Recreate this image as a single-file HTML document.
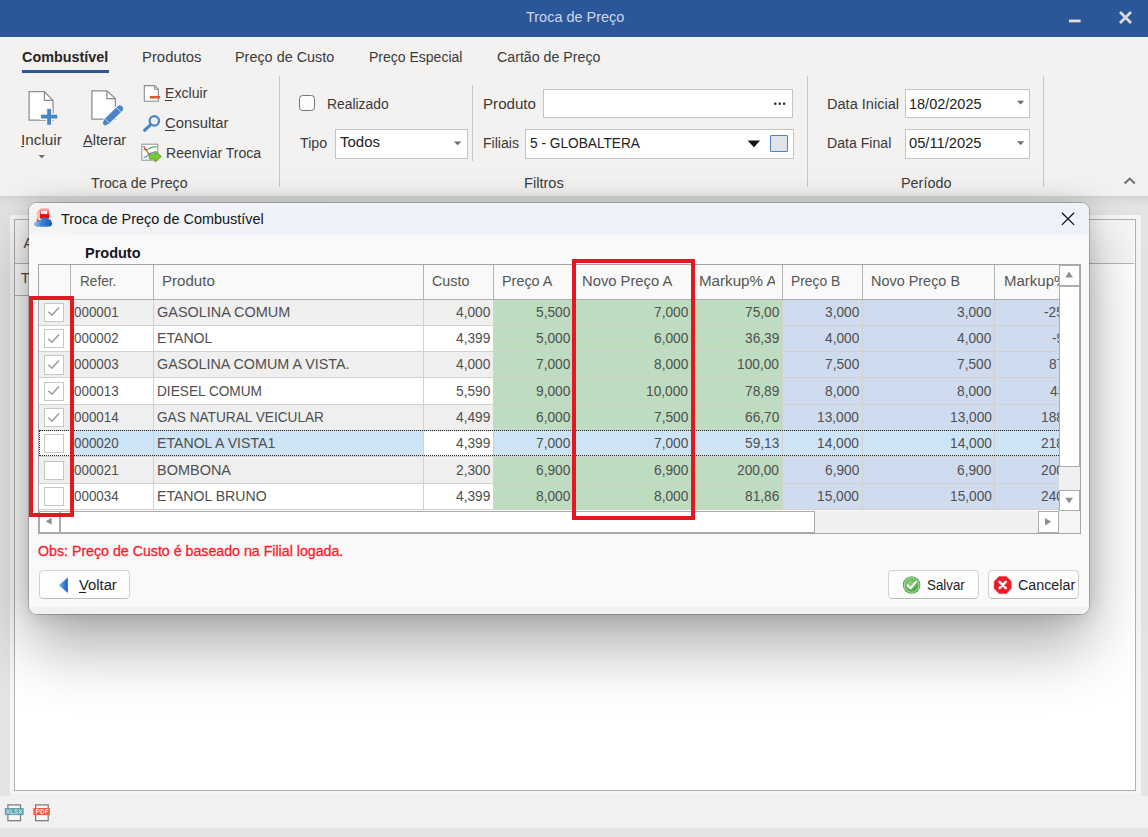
<!DOCTYPE html>
<html><head><meta charset="utf-8"><title>Troca de Preço</title>
<style>
*{box-sizing:border-box;margin:0;padding:0}
html,body{width:1148px;height:837px;overflow:hidden;background:#e4e4e4;font-family:"Liberation Sans",sans-serif}
body{position:relative}
.a{position:absolute}
.t{position:absolute;white-space:pre;transform-origin:0 0;font-family:"Liberation Sans",sans-serif}
.clip{position:absolute;overflow:hidden}
.ul{position:absolute;height:1px}
#texts{position:absolute;left:0;top:0;z-index:20}
#titlebar{left:0;top:0;width:1148px;height:37px;background:#2b579a}
#ribbon{left:0;top:37px;width:1148px;height:159px;background:#f3f2f1}
.gsep{position:absolute;width:1px;background:#c9c7c5}
.inp{position:absolute;background:#fff;border:1px solid #c4c4c4}
#rshadow{left:0;top:196px;width:1148px;height:12px;background:linear-gradient(to bottom,rgba(0,0,0,.07),rgba(0,0,0,.03) 40%,rgba(0,0,0,0))}
#pouter{left:10px;top:215px;width:1130.5px;height:579px;background:#f6f6f6}
#panel{left:13.5px;top:218.5px;width:1122px;height:572.5px;background:#fff;border:1.2px solid #b0b0b0}
#status{left:0;top:794px;width:1148px;height:34px;background:#f2f1f0}
#bottom{left:0;top:828px;width:1148px;height:9px;background:#e4e4e4}
#dialog{left:29px;top:203px;width:1060px;height:411px;background:#f9f9f9;border-radius:8px;
 box-shadow:0 0 0 1px rgba(0,0,0,.2),0 32px 64px rgba(0,0,0,.33),0 0 22px rgba(0,0,0,.17);z-index:10;overflow:hidden}
#dtitle{left:0;top:0;width:1060px;height:32px;background:linear-gradient(90deg,#f4f4f5 0%,#eff2fa 30%,#eff2fa 70%,#f0f2f9 100%)}
#dfoot{left:0;top:403.5px;width:1060px;height:8px;background:#f1f1f1}
#grid{left:9px;top:61px;width:1043.5px;height:269.5px;border:1.3px solid #a3a3a3;background:#f9f9f9;overflow:hidden}
.btn{position:absolute;height:28.5px;border:1px solid #d2d2d2;border-bottom-color:#bdbdbd;border-radius:4.5px;background:#fdfdfd}
.red{position:absolute;border:4.1px solid #e01a21;z-index:30}
.cb{position:absolute;width:19.6px;height:19.2px;background:#fff;border:1.2px solid #c6c6c6}

</style></head>
<body>
<div id="titlebar" class="a"></div>
<svg class="a" style="left:1060px;top:5px" width="80" height="28" viewBox="1060 5 80 28"><rect x="1069" y="19.6" width="11.6" height="2.7" fill="#e4e0dc"/><path d="M1120 11.9 L1131 22.9 M1131 11.9 L1120 22.9" stroke="#dadada" stroke-width="2.8" fill="none"/></svg>
<div id="ribbon" class="a"></div>
<div class="a" style="left:22.00px;top:69.60px;width:86.60px;height:3.90px;background:#2b579a"></div>
<div class="gsep" style="left:279px;top:76px;height:111px"></div>
<div class="gsep" style="left:807px;top:76px;height:111px"></div>
<div class="gsep" style="left:1043px;top:76px;height:111px"></div>
<div class="gsep" style="left:472px;top:85px;height:75.5px"></div>
<div class="inp" style="left:335.00px;top:129.00px;width:132.50px;height:29.50px;"></div>
<div class="inp" style="left:543.00px;top:89.00px;width:250.00px;height:29.00px;"></div>
<div class="inp" style="left:525.00px;top:129.00px;width:269.00px;height:29.50px;"></div>
<div class="inp" style="left:905.00px;top:89.00px;width:125.00px;height:29.00px;"></div>
<div class="inp" style="left:905.00px;top:129.00px;width:125.00px;height:29.50px;"></div>
<div class="a" style="left:298.70px;top:94.80px;width:16.30px;height:16.20px;border:1.3px solid #767676;border-radius:3.5px;background:#fbfbfb"></div>
<div class="a" style="left:770.30px;top:135.00px;width:17.40px;height:17.30px;border:1.3px solid #4a86c5;background:#dfe3ea;border-radius:1px"></div>
<svg class="a" style="left:0;top:76px" width="1148" height="120" viewBox="0 76 1148 120">
<!-- Incluir -->
<path d="M29.1 91.7 H44.4 L53 100.4 V120 H29.1 Z" fill="#fff" stroke="#8c8c8c" stroke-width="1.25" stroke-linejoin="miter"/>
<path d="M44.4 91.7 V100.4 H53" fill="none" stroke="#8c8c8c" stroke-width="1.25"/>
<rect x="39.2" y="112.8" width="20" height="8" fill="#f3f2f1" opacity="0"/>
<path d="M39.6 116.7 H58.8 M49.1 107.4 V126.2" stroke="#f3f2f1" stroke-width="6.6" fill="none"/><path d="M41.1 116.7 H57.3 M49.1 108.9 V124.7" stroke="#4a86c6" stroke-width="3.8" fill="none"/>
<path d="M38.5 154.9 H45 L41.75 158.6 Z" fill="#6e6e6e"/>
<!-- Alterar -->
<path d="M91.9 90.8 H106.9 L115.4 98.6 V119.1 H91.9 Z" fill="#fff" stroke="#8c8c8c" stroke-width="1.25"/>
<path d="M106.9 90.8 V98.6 H115.4" fill="none" stroke="#8c8c8c" stroke-width="1.25"/>
<g transform="translate(103.2,124.8) rotate(-44.2)">
<path d="M-0.6 0 L4.6 -4.4 H24.3 Q27.6 -4.4 27.6 0 Q27.6 4.4 24.3 4.4 H4.6 Z" fill="#f3f2f1"/>
<path d="M0.3 0.9 L0.9 -1.6 L4.8 -3.2 H23.6 Q26.3 -3.2 26.3 0 Q26.3 3.2 23.6 3.2 H4.8 L2.0 2.2 Z" fill="#4a86c6"/>
<path d="M5.6 -3.2 V3.2 M21.6 -3.2 V3.2" stroke="#cfe0f2" stroke-width="0.8"/>
</g>
<!-- Excluir -->
<path d="M144.3 85.6 H154.6 L158.3 89.3 V101.2 H144.3 Z" fill="#fff" stroke="#8c8c8c" stroke-width="1.1"/>
<path d="M154.6 85.6 V89.3 H158.3" fill="none" stroke="#8c8c8c" stroke-width="1"/>
<rect x="149.9" y="95.9" width="10.1" height="2.6" fill="#d9593a"/>
<!-- Consultar -->
<circle cx="154.3" cy="120.9" r="4.7" fill="none" stroke="#4a86c6" stroke-width="2.3"/>
<path d="M150.8 124.6 L144.6 130.2" stroke="#4a86c6" stroke-width="3.2" stroke-linecap="round"/>
<!-- Reenviar Troca -->
<rect x="141.8" y="144.2" width="16" height="16" fill="#fff" stroke="#9a9a9a" stroke-width="1.1"/>
<path d="M143.5 149.8 Q148 149.5 150.5 148 T157 146.8" stroke="#3fa33f" stroke-width="1.2" fill="none"/>
<path d="M143.5 146.2 L150.5 156.5" stroke="#d63a2f" stroke-width="1.2" fill="none"/>
<path d="M143.5 157.5 Q147 157 149 154.5 T156.5 152" stroke="#3f86d6" stroke-width="1.2" fill="none"/>
<path d="M149.3 153.9 H155 V151 L161.3 156.5 L155 162 V159.1 H149.3 Z" fill="#7dc832" stroke="#4f9a1c" stroke-width="0.8"/>
<!-- combo arrows -->
<path d="M453.9 141.4 H461.3 L457.6 145.2 Z" fill="#6a6a6a"/>
<path d="M1017 100.7 H1024.2 L1020.6 104.4 Z" fill="#6a6a6a"/>
<path d="M1017 141.2 H1024.2 L1020.6 144.9 Z" fill="#6a6a6a"/>
<path d="M747.6 140.6 H760.2 L753.9 147.2 Z" fill="#111"/>
<!-- dots -->
<rect x="774.2" y="102.6" width="2.2" height="2.2" fill="#222"/><rect x="778.6" y="102.6" width="2.2" height="2.2" fill="#222"/><rect x="783" y="102.6" width="2.2" height="2.2" fill="#222"/>
<!-- collapse caret -->
<path d="M1124.6 183.6 L1129.7 178.6 L1134.8 183.6" stroke="#6f6f6f" stroke-width="2.1" fill="none"/>
</svg>
<div id="rshadow" class="a"></div>
<div id="pouter" class="a"></div>
<div id="panel" class="a"></div>
<div class="a" style="left:14.70px;top:219.70px;width:1119.10px;height:43.30px;background:#f6f6f6"></div>
<div class="a" style="left:14.70px;top:262.60px;width:1119.10px;height:1.20px;background:#b5b5b5"></div>
<div class="a" style="left:14.70px;top:295.00px;width:45.30px;height:1.20px;background:#b5b5b5"></div>
<span class="t" style="left:23.6px;top:234.8px;font-size:14.67px;line-height:17.6px;color:#4a4a4a">A</span>
<span class="t" style="left:20.8px;top:270.4px;font-size:14.67px;line-height:17.6px;color:#4a4a4a">T</span>
<div id="status" class="a"></div>
<div id="bottom" class="a"></div>
<div class="a" style="left:0.00px;top:793.00px;width:10.00px;height:3.00px;background:#e4e4e4"></div>
<div class="a" style="left:1140.50px;top:793.00px;width:7.50px;height:3.00px;background:#e4e4e4"></div>
<svg class="a" style="left:0;top:800px" width="60" height="26" viewBox="0 800 60 26">
<rect x="7.9" y="804.9" width="12.6" height="15.8" fill="#f7f7f7" stroke="#777" stroke-width="1.2"/>
<rect x="4.8" y="808" width="18.9" height="7.1" fill="#62a5ae"/>
<rect x="35.6" y="804.9" width="12.6" height="15.8" fill="#f7f7f7" stroke="#777" stroke-width="1.2"/>
<rect x="33.4" y="808" width="16.4" height="7.1" fill="#e2613f"/>
<g fill="none" stroke="#e6f2f4" stroke-width="0.9">
<path d="M6.4 809.6 L9.6 813.6 M9.6 809.6 L6.4 813.6"/><path d="M11 809.4 V813.5 H13.6"/><path d="M17.4 809.9 Q14.6 809.2 14.8 810.6 Q15 811.5 16.2 811.7 Q17.6 812 17.3 813 Q16.9 813.9 14.7 813.3"/><path d="M18.8 809.6 L22 813.6 M22 809.6 L18.8 813.6"/>
</g>
<g fill="none" stroke="#fdeeea" stroke-width="1">
<path d="M36.3 813.7 V809.5 H38.2 Q39.4 809.6 39.4 810.6 Q39.4 811.7 38.2 811.7 H36.3"/><path d="M40.9 809.5 V813.6 H42.2 Q44 813.4 44 811.5 Q44 809.7 42.2 809.5 Z"/><path d="M45.6 813.7 V809.5 H48.2 M45.6 811.5 H47.8"/>
</g>
</svg>
<div id="dialog" class="a"><div id="dtitle" class="a"></div><div id="dfoot" class="a"></div></div>
<div id="dc" class="a" style="left:0;top:0;z-index:11">
<svg class="a" style="left:30px;top:204px" width="28" height="28" viewBox="30 204 28 28">
<defs><linearGradient id="cl" x1="0" x2="1"><stop offset="0" stop-color="#9cc4ee"/><stop offset="0.45" stop-color="#3b80d2"/><stop offset="1" stop-color="#145cbb"/></linearGradient>
<linearGradient id="pg" x1="0" y1="0" x2="0" y2="1"><stop offset="0" stop-color="#ffbcbc"/><stop offset="0.4" stop-color="#ff5a5a"/><stop offset="0.68" stop-color="#ff0404"/><stop offset="1" stop-color="#f80000"/></linearGradient></defs>
<rect x="39.7" y="208.2" width="9.5" height="10.6" rx="1.6" fill="url(#pg)"/>
<rect x="41.1" y="211" width="6" height="2.8" fill="#fff"/>
<path d="M39.9 210.3 L37.7 213 V221.3" stroke="#ff9c9c" stroke-width="1.7" fill="none"/>
<path d="M37.9 213.5 V217.5" stroke="#ffe4e4" stroke-width="0.7" fill="none"/>
<path d="M36.5 226.6 Q33.6 226 33.9 223.6 Q34.3 221.4 36.8 221.3 Q38.5 219.4 41 219.8 Q42.6 217 45.3 217.4 Q47.6 217.6 48.6 219.2 Q50.8 219.2 51.5 221.5 Q52.7 223.5 51.7 225.2 Q50.5 226.8 48.5 226.5 Q47 227.2 45.5 226.5 Q44 227.3 42.3 226.5 Q40.8 227.3 39.5 226.5 Q38 227.2 36.5 226.6 Z" fill="url(#cl)"/>
<path d="M37.8 219.3 V221.6" stroke="#b24a72" stroke-width="1.6" opacity="0.9"/>
</svg>
<svg class="a" style="left:1058px;top:209px" width="20" height="20" viewBox="1058 209 20 20"><path d="M1061.9 212.7 L1074.1 224.9 M1074.1 212.7 L1061.9 224.9" stroke="#111" stroke-width="1.25" fill="none"/></svg>
<div class="a" style="left:38.10px;top:264.00px;width:1043.20px;height:269.70px;background:#f9f9f9"></div>
<div class="a" style="left:39.20px;top:299.50px;width:31.50px;height:26.33px;background:#efefef"></div>
<div class="a" style="left:70.70px;top:299.50px;width:82.70px;height:26.33px;background:#efefef"></div>
<div class="a" style="left:153.40px;top:299.50px;width:270.10px;height:26.33px;background:#efefef"></div>
<div class="a" style="left:423.50px;top:299.50px;width:70.00px;height:26.33px;background:#efefef"></div>
<div class="a" style="left:493.50px;top:299.50px;width:79.50px;height:26.33px;background:#bedcbf"></div>
<div class="a" style="left:573.00px;top:299.50px;width:120.00px;height:26.33px;background:#bedcbf"></div>
<div class="a" style="left:693.00px;top:299.50px;width:89.00px;height:26.33px;background:#bedcbf"></div>
<div class="a" style="left:782.00px;top:299.50px;width:80.30px;height:26.33px;background:#cfdcf0"></div>
<div class="a" style="left:862.30px;top:299.50px;width:132.40px;height:26.33px;background:#cfdcf0"></div>
<div class="a" style="left:994.70px;top:299.50px;width:64.60px;height:26.33px;background:#cfdcf0"></div>
<div class="a" style="left:39.20px;top:324.83px;width:1020.10px;height:1.00px;background:#d3d1ce"></div>
<div class="a" style="left:39.20px;top:325.83px;width:31.50px;height:26.33px;background:#ffffff"></div>
<div class="a" style="left:70.70px;top:325.83px;width:82.70px;height:26.33px;background:#ffffff"></div>
<div class="a" style="left:153.40px;top:325.83px;width:270.10px;height:26.33px;background:#ffffff"></div>
<div class="a" style="left:423.50px;top:325.83px;width:70.00px;height:26.33px;background:#ffffff"></div>
<div class="a" style="left:493.50px;top:325.83px;width:79.50px;height:26.33px;background:#bedcbf"></div>
<div class="a" style="left:573.00px;top:325.83px;width:120.00px;height:26.33px;background:#bedcbf"></div>
<div class="a" style="left:693.00px;top:325.83px;width:89.00px;height:26.33px;background:#bedcbf"></div>
<div class="a" style="left:782.00px;top:325.83px;width:80.30px;height:26.33px;background:#cfdcf0"></div>
<div class="a" style="left:862.30px;top:325.83px;width:132.40px;height:26.33px;background:#cfdcf0"></div>
<div class="a" style="left:994.70px;top:325.83px;width:64.60px;height:26.33px;background:#cfdcf0"></div>
<div class="a" style="left:39.20px;top:351.16px;width:1020.10px;height:1.00px;background:#d3d1ce"></div>
<div class="a" style="left:39.20px;top:352.16px;width:31.50px;height:26.33px;background:#efefef"></div>
<div class="a" style="left:70.70px;top:352.16px;width:82.70px;height:26.33px;background:#efefef"></div>
<div class="a" style="left:153.40px;top:352.16px;width:270.10px;height:26.33px;background:#efefef"></div>
<div class="a" style="left:423.50px;top:352.16px;width:70.00px;height:26.33px;background:#efefef"></div>
<div class="a" style="left:493.50px;top:352.16px;width:79.50px;height:26.33px;background:#bedcbf"></div>
<div class="a" style="left:573.00px;top:352.16px;width:120.00px;height:26.33px;background:#bedcbf"></div>
<div class="a" style="left:693.00px;top:352.16px;width:89.00px;height:26.33px;background:#bedcbf"></div>
<div class="a" style="left:782.00px;top:352.16px;width:80.30px;height:26.33px;background:#cfdcf0"></div>
<div class="a" style="left:862.30px;top:352.16px;width:132.40px;height:26.33px;background:#cfdcf0"></div>
<div class="a" style="left:994.70px;top:352.16px;width:64.60px;height:26.33px;background:#cfdcf0"></div>
<div class="a" style="left:39.20px;top:377.49px;width:1020.10px;height:1.00px;background:#d3d1ce"></div>
<div class="a" style="left:39.20px;top:378.49px;width:31.50px;height:26.33px;background:#ffffff"></div>
<div class="a" style="left:70.70px;top:378.49px;width:82.70px;height:26.33px;background:#ffffff"></div>
<div class="a" style="left:153.40px;top:378.49px;width:270.10px;height:26.33px;background:#ffffff"></div>
<div class="a" style="left:423.50px;top:378.49px;width:70.00px;height:26.33px;background:#ffffff"></div>
<div class="a" style="left:493.50px;top:378.49px;width:79.50px;height:26.33px;background:#bedcbf"></div>
<div class="a" style="left:573.00px;top:378.49px;width:120.00px;height:26.33px;background:#bedcbf"></div>
<div class="a" style="left:693.00px;top:378.49px;width:89.00px;height:26.33px;background:#bedcbf"></div>
<div class="a" style="left:782.00px;top:378.49px;width:80.30px;height:26.33px;background:#cfdcf0"></div>
<div class="a" style="left:862.30px;top:378.49px;width:132.40px;height:26.33px;background:#cfdcf0"></div>
<div class="a" style="left:994.70px;top:378.49px;width:64.60px;height:26.33px;background:#cfdcf0"></div>
<div class="a" style="left:39.20px;top:403.82px;width:1020.10px;height:1.00px;background:#d3d1ce"></div>
<div class="a" style="left:39.20px;top:404.82px;width:31.50px;height:26.33px;background:#efefef"></div>
<div class="a" style="left:70.70px;top:404.82px;width:82.70px;height:26.33px;background:#efefef"></div>
<div class="a" style="left:153.40px;top:404.82px;width:270.10px;height:26.33px;background:#efefef"></div>
<div class="a" style="left:423.50px;top:404.82px;width:70.00px;height:26.33px;background:#efefef"></div>
<div class="a" style="left:493.50px;top:404.82px;width:79.50px;height:26.33px;background:#bedcbf"></div>
<div class="a" style="left:573.00px;top:404.82px;width:120.00px;height:26.33px;background:#bedcbf"></div>
<div class="a" style="left:693.00px;top:404.82px;width:89.00px;height:26.33px;background:#bedcbf"></div>
<div class="a" style="left:782.00px;top:404.82px;width:80.30px;height:26.33px;background:#cfdcf0"></div>
<div class="a" style="left:862.30px;top:404.82px;width:132.40px;height:26.33px;background:#cfdcf0"></div>
<div class="a" style="left:994.70px;top:404.82px;width:64.60px;height:26.33px;background:#cfdcf0"></div>
<div class="a" style="left:39.20px;top:430.15px;width:1020.10px;height:1.00px;background:#d3d1ce"></div>
<div class="a" style="left:39.20px;top:431.15px;width:31.50px;height:26.33px;background:#ffffff"></div>
<div class="a" style="left:70.70px;top:431.15px;width:82.70px;height:26.33px;background:#cde4f7"></div>
<div class="a" style="left:153.40px;top:431.15px;width:270.10px;height:26.33px;background:#cde4f7"></div>
<div class="a" style="left:423.50px;top:431.15px;width:70.00px;height:26.33px;background:#ffffff"></div>
<div class="a" style="left:493.50px;top:431.15px;width:79.50px;height:26.33px;background:#cde4f7"></div>
<div class="a" style="left:573.00px;top:431.15px;width:120.00px;height:26.33px;background:#cde4f7"></div>
<div class="a" style="left:693.00px;top:431.15px;width:89.00px;height:26.33px;background:#cde4f7"></div>
<div class="a" style="left:782.00px;top:431.15px;width:80.30px;height:26.33px;background:#cde4f7"></div>
<div class="a" style="left:862.30px;top:431.15px;width:132.40px;height:26.33px;background:#cde4f7"></div>
<div class="a" style="left:994.70px;top:431.15px;width:64.60px;height:26.33px;background:#cde4f7"></div>
<div class="a" style="left:39.20px;top:456.48px;width:1020.10px;height:1.00px;background:#d3d1ce"></div>
<div class="a" style="left:39.20px;top:457.48px;width:31.50px;height:26.33px;background:#efefef"></div>
<div class="a" style="left:70.70px;top:457.48px;width:82.70px;height:26.33px;background:#efefef"></div>
<div class="a" style="left:153.40px;top:457.48px;width:270.10px;height:26.33px;background:#efefef"></div>
<div class="a" style="left:423.50px;top:457.48px;width:70.00px;height:26.33px;background:#efefef"></div>
<div class="a" style="left:493.50px;top:457.48px;width:79.50px;height:26.33px;background:#bedcbf"></div>
<div class="a" style="left:573.00px;top:457.48px;width:120.00px;height:26.33px;background:#bedcbf"></div>
<div class="a" style="left:693.00px;top:457.48px;width:89.00px;height:26.33px;background:#bedcbf"></div>
<div class="a" style="left:782.00px;top:457.48px;width:80.30px;height:26.33px;background:#cfdcf0"></div>
<div class="a" style="left:862.30px;top:457.48px;width:132.40px;height:26.33px;background:#cfdcf0"></div>
<div class="a" style="left:994.70px;top:457.48px;width:64.60px;height:26.33px;background:#cfdcf0"></div>
<div class="a" style="left:39.20px;top:482.81px;width:1020.10px;height:1.00px;background:#d3d1ce"></div>
<div class="a" style="left:39.20px;top:483.81px;width:31.50px;height:26.33px;background:#ffffff"></div>
<div class="a" style="left:70.70px;top:483.81px;width:82.70px;height:26.33px;background:#ffffff"></div>
<div class="a" style="left:153.40px;top:483.81px;width:270.10px;height:26.33px;background:#ffffff"></div>
<div class="a" style="left:423.50px;top:483.81px;width:70.00px;height:26.33px;background:#ffffff"></div>
<div class="a" style="left:493.50px;top:483.81px;width:79.50px;height:26.33px;background:#bedcbf"></div>
<div class="a" style="left:573.00px;top:483.81px;width:120.00px;height:26.33px;background:#bedcbf"></div>
<div class="a" style="left:693.00px;top:483.81px;width:89.00px;height:26.33px;background:#bedcbf"></div>
<div class="a" style="left:782.00px;top:483.81px;width:80.30px;height:26.33px;background:#cfdcf0"></div>
<div class="a" style="left:862.30px;top:483.81px;width:132.40px;height:26.33px;background:#cfdcf0"></div>
<div class="a" style="left:994.70px;top:483.81px;width:64.60px;height:26.33px;background:#cfdcf0"></div>
<div class="a" style="left:39.20px;top:509.14px;width:1020.10px;height:1.00px;background:#d3d1ce"></div>
<div class="a" style="left:70.20px;top:299.50px;width:1.00px;height:210.64px;background:#d3d1ce"></div>
<div class="a" style="left:152.90px;top:299.50px;width:1.00px;height:210.64px;background:#d3d1ce"></div>
<div class="a" style="left:423.00px;top:299.50px;width:1.00px;height:210.64px;background:#d3d1ce"></div>
<div class="a" style="left:493.00px;top:299.50px;width:1.00px;height:210.64px;background:#d3d1ce"></div>
<div class="a" style="left:572.50px;top:299.50px;width:1.00px;height:210.64px;background:#d3d1ce"></div>
<div class="a" style="left:692.50px;top:299.50px;width:1.00px;height:210.64px;background:#d3d1ce"></div>
<div class="a" style="left:781.50px;top:299.50px;width:1.00px;height:210.64px;background:#d3d1ce"></div>
<div class="a" style="left:861.80px;top:299.50px;width:1.00px;height:210.64px;background:#d3d1ce"></div>
<div class="a" style="left:994.20px;top:299.50px;width:1.00px;height:210.64px;background:#d3d1ce"></div>
<div class="a" style="left:70.20px;top:265.00px;width:1.10px;height:34.00px;background:#b3b3b3"></div>
<div class="a" style="left:152.90px;top:265.00px;width:1.10px;height:34.00px;background:#b3b3b3"></div>
<div class="a" style="left:423.00px;top:265.00px;width:1.10px;height:34.00px;background:#b3b3b3"></div>
<div class="a" style="left:493.00px;top:265.00px;width:1.10px;height:34.00px;background:#b3b3b3"></div>
<div class="a" style="left:572.50px;top:265.00px;width:1.10px;height:34.00px;background:#b3b3b3"></div>
<div class="a" style="left:692.50px;top:265.00px;width:1.10px;height:34.00px;background:#b3b3b3"></div>
<div class="a" style="left:781.50px;top:265.00px;width:1.10px;height:34.00px;background:#b3b3b3"></div>
<div class="a" style="left:861.80px;top:265.00px;width:1.10px;height:34.00px;background:#b3b3b3"></div>
<div class="a" style="left:994.20px;top:265.00px;width:1.10px;height:34.00px;background:#b3b3b3"></div>
<div class="a" style="left:39.20px;top:298.90px;width:1020.10px;height:1.20px;background:#adadad"></div>
<div class="a" style="left:39.2px;top:429.75px;width:1020.10px;height:0;border-top:1.3px dotted #222"></div>
<div class="a" style="left:39.2px;top:455.38px;width:1020.10px;height:0;border-top:1.3px dotted #222"></div>
<div class="a" style="left:39.2px;top:431.15px;width:0;height:24.83px;border-left:1.3px dotted #222"></div>
<div class="cb" style="left:44.4px;top:302.67px"><svg width="19" height="19" viewBox="0 0 19 19" style="position:absolute;left:-1.2px;top:-1.2px"><path d="M4.3 9.8 L7.9 13.3 L15 5.6" stroke="#9b9b9b" stroke-width="1.5" fill="none"/></svg></div>
<div class="cb" style="left:44.4px;top:329.00px"><svg width="19" height="19" viewBox="0 0 19 19" style="position:absolute;left:-1.2px;top:-1.2px"><path d="M4.3 9.8 L7.9 13.3 L15 5.6" stroke="#9b9b9b" stroke-width="1.5" fill="none"/></svg></div>
<div class="cb" style="left:44.4px;top:355.32px"><svg width="19" height="19" viewBox="0 0 19 19" style="position:absolute;left:-1.2px;top:-1.2px"><path d="M4.3 9.8 L7.9 13.3 L15 5.6" stroke="#9b9b9b" stroke-width="1.5" fill="none"/></svg></div>
<div class="cb" style="left:44.4px;top:381.66px"><svg width="19" height="19" viewBox="0 0 19 19" style="position:absolute;left:-1.2px;top:-1.2px"><path d="M4.3 9.8 L7.9 13.3 L15 5.6" stroke="#9b9b9b" stroke-width="1.5" fill="none"/></svg></div>
<div class="cb" style="left:44.4px;top:407.99px"><svg width="19" height="19" viewBox="0 0 19 19" style="position:absolute;left:-1.2px;top:-1.2px"><path d="M4.3 9.8 L7.9 13.3 L15 5.6" stroke="#9b9b9b" stroke-width="1.5" fill="none"/></svg></div>
<div class="cb" style="left:44.4px;top:434.31px"></div>
<div class="cb" style="left:44.4px;top:460.65px"></div>
<div class="cb" style="left:44.4px;top:486.98px"></div>
<div class="a" style="left:1059.20px;top:264.00px;width:22.10px;height:247.00px;background:#f0f0f0"></div>
<div class="a" style="left:1059.20px;top:265.00px;width:21.00px;height:21.20px;background:#fff;border:1.15px solid #acacac"></div>
<div class="a" style="left:1059.20px;top:286.00px;width:21.00px;height:181.20px;background:#fff;border:1.15px solid #acacac"></div>
<div class="a" style="left:1059.20px;top:490.20px;width:21.00px;height:20.60px;background:#fff;border:1.15px solid #acacac"></div>
<div class="a" style="left:38.10px;top:510.80px;width:1043.20px;height:22.90px;background:#f0f0f0"></div>
<div class="a" style="left:1059.40px;top:511.20px;width:21.90px;height:22.50px;background:#f5f5f5"></div>
<div class="a" style="left:39.10px;top:510.90px;width:21.20px;height:21.80px;background:#fff;border:1.15px solid #acacac"></div>
<div class="a" style="left:60.10px;top:510.90px;width:755.10px;height:21.80px;background:#fff;border:1.15px solid #acacac"></div>
<div class="a" style="left:1038.20px;top:510.90px;width:21.00px;height:21.80px;background:#fff;border:1.15px solid #acacac"></div>
<svg class="a" style="left:30px;top:260px" width="1060" height="280" viewBox="30 260 1060 280">
<path d="M1065.4 277.4 H1072.9 L1069.15 271.4 Z" fill="#8e8e8e"/>
<path d="M1065.4 497.8 H1072.9 L1069.15 503.6 Z" fill="#8e8e8e"/>
<path d="M51.6 517.8 V524.8 L45.7 521.3 Z" fill="#8e8e8e"/>
<path d="M1045 518 V525.4 L1051.2 521.7 Z" fill="#8e8e8e"/>
</svg>
<div class="a" style="left:38.10px;top:264.00px;width:1043.20px;height:269.70px;border:1.2px solid #a6a6a6;background:none"></div>
<div class="btn" style="left:38.8px;top:570.3px;width:90.8px"></div>
<div class="btn" style="left:888px;top:570.3px;width:90.8px"></div>
<div class="btn" style="left:988.2px;top:570.3px;width:90.4px"></div>
<svg class="a" style="left:30px;top:565px" width="1060" height="40" viewBox="30 565 1060 40">
<defs>
<linearGradient id="tri" x1="0" x2="1"><stop offset="0" stop-color="#8fb8ee"/><stop offset="0.55" stop-color="#3f7fd8"/><stop offset="1" stop-color="#1f5fc4"/></linearGradient>
<radialGradient id="gr" cx="0.4" cy="0.35" r="0.75"><stop offset="0" stop-color="#8fd07f"/><stop offset="1" stop-color="#3f9a3a"/></radialGradient>
</defs>
<path d="M67.9 577.6 V593 L58.8 585.3 Z" fill="url(#tri)"/>
<circle cx="911.6" cy="585" r="8.8" fill="#5aa851"/>
<circle cx="911.6" cy="585" r="7.3" fill="url(#gr)" stroke="#b7e0ae" stroke-width="1"/>
<path d="M907.6 585.4 L910.5 588.3 L915.9 582" stroke="#fff" stroke-width="2.2" fill="none" stroke-linecap="round" stroke-linejoin="round"/>
<path d="M999.1 576.3 H1006.3 L1011.4 581.4 V588.6 L1006.3 593.7 H999.1 L994 588.6 V581.4 Z" fill="#ee1c24" stroke="#f56a6e" stroke-width="0.5"/>
<path d="M999.6 581.9 L1005.8 588.1 M1005.8 581.9 L999.6 588.1" stroke="#fff" stroke-width="2.5" stroke-linecap="round"/>
</svg>
</div>
<div class="red" style="left:29.0px;top:296.2px;width:44.6px;height:220.4px"></div>
<div class="red" style="left:571.8px;top:259px;width:122.8px;height:260.6px"></div>
<div id="texts">
<span class="t" style="left:525.50px;top:8.13px;font-size:15.5px;line-height:18.6px;color:#ccd7ea;transform:scaleX(0.9327);">Troca de Preço</span>
<span class="t" style="left:22.20px;top:48.92px;font-size:14.67px;line-height:17.6px;color:#262626;transform:scaleX(0.9812);font-weight:700;">Combustível</span>
<span class="t" style="left:141.50px;top:48.92px;font-size:14.67px;line-height:17.6px;color:#3a3a3a;transform:scaleX(1.0141);">Produtos</span>
<span class="t" style="left:235.20px;top:48.92px;font-size:14.67px;line-height:17.6px;color:#3a3a3a;transform:scaleX(0.9829);">Preço de Custo</span>
<span class="t" style="left:369.00px;top:48.92px;font-size:14.67px;line-height:17.6px;color:#3a3a3a;transform:scaleX(0.9553);">Preço Especial</span>
<span class="t" style="left:497.00px;top:48.92px;font-size:14.67px;line-height:17.6px;color:#3a3a3a;transform:scaleX(0.9697);">Cartão de Preço</span>
<span class="t" style="left:21.30px;top:131.72px;font-size:14.67px;line-height:17.6px;color:#3a3a3a;transform:scaleX(1.0432);">Incluir</span>
<div class="ul" style="left:21.30px;top:146px;width:3.00px;background:#3a3a3a"></div>
<span class="t" style="left:82.50px;top:131.72px;font-size:14.67px;line-height:17.6px;color:#3a3a3a;transform:scaleX(1.0007);">Alterar</span>
<div class="ul" style="left:82.50px;top:146px;width:9.50px;background:#3a3a3a"></div>
<span class="t" style="left:165.20px;top:85.22px;font-size:14.67px;line-height:17.6px;color:#3a3a3a;transform:scaleX(0.9640);">Excluir</span>
<div class="ul" style="left:165.20px;top:100px;width:7.10px;background:#3a3a3a"></div>
<span class="t" style="left:165.20px;top:115.12px;font-size:14.67px;line-height:17.6px;color:#3a3a3a;transform:scaleX(1.0122);">Consultar</span>
<div class="ul" style="left:165.20px;top:130px;width:9.40px;background:#3a3a3a"></div>
<span class="t" style="left:165.50px;top:144.92px;font-size:14.67px;line-height:17.6px;color:#3a3a3a;transform:scaleX(0.9568);">Reenviar Troca</span>
<span class="t" style="left:90.70px;top:174.92px;font-size:14.67px;line-height:17.6px;color:#3a3a3a;transform:scaleX(0.9693);">Troca de Preço</span>
<span class="t" style="left:326.80px;top:95.52px;font-size:14.67px;line-height:17.6px;color:#3a3a3a;transform:scaleX(0.9465);">Realizado</span>
<span class="t" style="left:299.80px;top:134.92px;font-size:14.67px;line-height:17.6px;color:#3a3a3a;transform:scaleX(0.9725);">Tipo</span>
<span class="t" style="left:340.00px;top:133.92px;font-size:14.67px;line-height:17.6px;color:#222;transform:scaleX(1.0228);">Todos</span>
<span class="t" style="left:483.00px;top:95.52px;font-size:14.67px;line-height:17.6px;color:#3a3a3a;transform:scaleX(1.0323);">Produto</span>
<span class="t" style="left:483.00px;top:134.92px;font-size:14.67px;line-height:17.6px;color:#3a3a3a;transform:scaleX(0.9608);">Filiais</span>
<span class="t" style="left:529.50px;top:134.92px;font-size:14.67px;line-height:17.6px;color:#222;transform:scaleX(0.9334);">5 - GLOBALTERA</span>
<span class="t" style="left:524.30px;top:174.92px;font-size:14.67px;line-height:17.6px;color:#3a3a3a;transform:scaleX(0.9948);">Filtros</span>
<span class="t" style="left:826.70px;top:95.52px;font-size:14.67px;line-height:17.6px;color:#3a3a3a;transform:scaleX(0.9929);">Data Inicial</span>
<span class="t" style="left:826.70px;top:134.92px;font-size:14.67px;line-height:17.6px;color:#3a3a3a;transform:scaleX(0.9624);">Data Final</span>
<span class="t" style="left:909.00px;top:95.52px;font-size:14.67px;line-height:17.6px;color:#222;transform:scaleX(0.9883);">18/02/2025</span>
<span class="t" style="left:909.00px;top:134.92px;font-size:14.67px;line-height:17.6px;color:#222;transform:scaleX(1.0032);">05/11/2025</span>
<span class="t" style="left:900.60px;top:174.92px;font-size:14.67px;line-height:17.6px;color:#3a3a3a;transform:scaleX(0.9816);">Período</span>
<span class="t" style="left:60.80px;top:210.40px;font-size:15px;line-height:18.0px;color:#151515;transform:scaleX(0.9640);">Troca de Preço de Combustível</span>
<span class="t" style="left:84.60px;top:245.32px;font-size:14.67px;line-height:17.6px;color:#14141e;transform:scaleX(0.9880);font-weight:700;">Produto</span>
<span class="t" style="left:79.60px;top:272.92px;font-size:14.67px;line-height:17.6px;color:#555;transform:scaleX(0.9282);">Refer.</span>
<span class="t" style="left:162.10px;top:272.92px;font-size:14.67px;line-height:17.6px;color:#555;transform:scaleX(1.0284);">Produto</span>
<span class="t" style="left:432.20px;top:272.92px;font-size:14.67px;line-height:17.6px;color:#555;transform:scaleX(0.9792);">Custo</span>
<span class="t" style="left:502.00px;top:272.92px;font-size:14.67px;line-height:17.6px;color:#555;transform:scaleX(0.9819);">Preço A</span>
<span class="t" style="left:581.80px;top:272.92px;font-size:14.67px;line-height:17.6px;color:#555;transform:scaleX(1.0075);">Novo Preço A</span>
<div class="clip" style="left:699.00px;top:270.92px;width:75.50px;height:21.60px"><span class="t" style="left:0.00px;top:2px;font-size:14.67px;line-height:17.6px;color:#555;transform:scaleX(1.0340);">Markup% A</span></div>
<span class="t" style="left:790.90px;top:272.92px;font-size:14.67px;line-height:17.6px;color:#555;transform:scaleX(0.9417);">Preço B</span>
<span class="t" style="left:871.00px;top:272.92px;font-size:14.67px;line-height:17.6px;color:#555;transform:scaleX(0.9843);">Novo Preço B</span>
<div class="clip" style="left:1003.00px;top:270.92px;width:56.00px;height:21.60px"><span class="t" style="left:0.80px;top:2px;font-size:14.67px;line-height:17.6px;color:#555;transform:scaleX(1.0229);">Markup% B</span></div>
<div class="clip" style="left:71.50px;top:301.82px;width:81.50px;height:21.60px"><span class="t" style="left:2.24px;top:2px;font-size:14.67px;line-height:17.6px;color:#4f4f4f;transform:scaleX(0.9150);">000001</span></div>
<span class="t" style="left:157.00px;top:303.82px;font-size:14.67px;line-height:17.6px;color:#4f4f4f;transform:scaleX(0.9860);">GASOLINA COMUM</span>
<span class="t" style="left:456.12px;top:303.82px;font-size:14.67px;line-height:17.6px;color:#4f4f4f;transform:scaleX(0.9370);">4,000</span>
<span class="t" style="left:536.32px;top:303.82px;font-size:14.67px;line-height:17.6px;color:#4f4f4f;transform:scaleX(0.9370);">5,500</span>
<span class="t" style="left:653.82px;top:303.82px;font-size:14.67px;line-height:17.6px;color:#4f4f4f;transform:scaleX(0.9370);">7,000</span>
<span class="t" style="left:744.82px;top:303.82px;font-size:14.67px;line-height:17.6px;color:#4f4f4f;transform:scaleX(0.9370);">75,00</span>
<span class="t" style="left:824.82px;top:303.82px;font-size:14.67px;line-height:17.6px;color:#4f4f4f;transform:scaleX(0.9370);">3,000</span>
<span class="t" style="left:957.22px;top:303.82px;font-size:14.67px;line-height:17.6px;color:#4f4f4f;transform:scaleX(0.9370);">3,000</span>
<div class="clip" style="left:995.00px;top:301.82px;width:64.00px;height:21.60px"><span class="t" style="left:49.26px;top:2px;font-size:14.67px;line-height:17.6px;color:#4f4f4f;transform:scaleX(0.9370);">-25,00</span></div>
<div class="clip" style="left:71.50px;top:328.15px;width:81.50px;height:21.60px"><span class="t" style="left:2.24px;top:2px;font-size:14.67px;line-height:17.6px;color:#4f4f4f;transform:scaleX(0.9150);">000002</span></div>
<span class="t" style="left:157.00px;top:330.15px;font-size:14.67px;line-height:17.6px;color:#4f4f4f;transform:scaleX(0.9624);">ETANOL</span>
<span class="t" style="left:456.12px;top:330.15px;font-size:14.67px;line-height:17.6px;color:#4f4f4f;transform:scaleX(0.9370);">4,399</span>
<span class="t" style="left:536.32px;top:330.15px;font-size:14.67px;line-height:17.6px;color:#4f4f4f;transform:scaleX(0.9370);">5,000</span>
<span class="t" style="left:653.82px;top:330.15px;font-size:14.67px;line-height:17.6px;color:#4f4f4f;transform:scaleX(0.9370);">6,000</span>
<span class="t" style="left:744.82px;top:330.15px;font-size:14.67px;line-height:17.6px;color:#4f4f4f;transform:scaleX(0.9370);">36,39</span>
<span class="t" style="left:824.82px;top:330.15px;font-size:14.67px;line-height:17.6px;color:#4f4f4f;transform:scaleX(0.9370);">4,000</span>
<span class="t" style="left:957.22px;top:330.15px;font-size:14.67px;line-height:17.6px;color:#4f4f4f;transform:scaleX(0.9370);">4,000</span>
<div class="clip" style="left:995.00px;top:328.15px;width:64.00px;height:21.60px"><span class="t" style="left:56.90px;top:2px;font-size:14.67px;line-height:17.6px;color:#4f4f4f;transform:scaleX(0.9370);">-9,07</span></div>
<div class="clip" style="left:71.50px;top:354.48px;width:81.50px;height:21.60px"><span class="t" style="left:2.24px;top:2px;font-size:14.67px;line-height:17.6px;color:#4f4f4f;transform:scaleX(0.9150);">000003</span></div>
<span class="t" style="left:157.00px;top:356.48px;font-size:14.67px;line-height:17.6px;color:#4f4f4f;transform:scaleX(0.9785);">GASOLINA COMUM A VISTA.</span>
<span class="t" style="left:456.12px;top:356.48px;font-size:14.67px;line-height:17.6px;color:#4f4f4f;transform:scaleX(0.9370);">4,000</span>
<span class="t" style="left:536.32px;top:356.48px;font-size:14.67px;line-height:17.6px;color:#4f4f4f;transform:scaleX(0.9370);">7,000</span>
<span class="t" style="left:653.82px;top:356.48px;font-size:14.67px;line-height:17.6px;color:#4f4f4f;transform:scaleX(0.9370);">8,000</span>
<span class="t" style="left:737.20px;top:356.48px;font-size:14.67px;line-height:17.6px;color:#4f4f4f;transform:scaleX(0.9370);">100,00</span>
<span class="t" style="left:824.82px;top:356.48px;font-size:14.67px;line-height:17.6px;color:#4f4f4f;transform:scaleX(0.9370);">7,500</span>
<span class="t" style="left:957.22px;top:356.48px;font-size:14.67px;line-height:17.6px;color:#4f4f4f;transform:scaleX(0.9370);">7,500</span>
<div class="clip" style="left:995.00px;top:354.48px;width:64.00px;height:21.60px"><span class="t" style="left:53.82px;top:2px;font-size:14.67px;line-height:17.6px;color:#4f4f4f;transform:scaleX(0.9370);">87,50</span></div>
<div class="clip" style="left:71.50px;top:380.81px;width:81.50px;height:21.60px"><span class="t" style="left:2.24px;top:2px;font-size:14.67px;line-height:17.6px;color:#4f4f4f;transform:scaleX(0.9150);">000013</span></div>
<span class="t" style="left:157.00px;top:382.81px;font-size:14.67px;line-height:17.6px;color:#4f4f4f;transform:scaleX(0.9320);">DIESEL COMUM</span>
<span class="t" style="left:456.12px;top:382.81px;font-size:14.67px;line-height:17.6px;color:#4f4f4f;transform:scaleX(0.9370);">5,590</span>
<span class="t" style="left:536.32px;top:382.81px;font-size:14.67px;line-height:17.6px;color:#4f4f4f;transform:scaleX(0.9370);">9,000</span>
<span class="t" style="left:646.20px;top:382.81px;font-size:14.67px;line-height:17.6px;color:#4f4f4f;transform:scaleX(0.9370);">10,000</span>
<span class="t" style="left:744.82px;top:382.81px;font-size:14.67px;line-height:17.6px;color:#4f4f4f;transform:scaleX(0.9370);">78,89</span>
<span class="t" style="left:824.82px;top:382.81px;font-size:14.67px;line-height:17.6px;color:#4f4f4f;transform:scaleX(0.9370);">8,000</span>
<span class="t" style="left:957.22px;top:382.81px;font-size:14.67px;line-height:17.6px;color:#4f4f4f;transform:scaleX(0.9370);">8,000</span>
<div class="clip" style="left:995.00px;top:380.81px;width:64.00px;height:21.60px"><span class="t" style="left:54.85px;top:2px;font-size:14.67px;line-height:17.6px;color:#4f4f4f;transform:scaleX(0.9370);">43,11</span></div>
<div class="clip" style="left:71.50px;top:407.14px;width:81.50px;height:21.60px"><span class="t" style="left:2.24px;top:2px;font-size:14.67px;line-height:17.6px;color:#4f4f4f;transform:scaleX(0.9150);">000014</span></div>
<span class="t" style="left:157.00px;top:409.14px;font-size:14.67px;line-height:17.6px;color:#4f4f4f;transform:scaleX(0.9320);">GAS NATURAL VEICULAR</span>
<span class="t" style="left:456.12px;top:409.14px;font-size:14.67px;line-height:17.6px;color:#4f4f4f;transform:scaleX(0.9370);">4,499</span>
<span class="t" style="left:536.32px;top:409.14px;font-size:14.67px;line-height:17.6px;color:#4f4f4f;transform:scaleX(0.9370);">6,000</span>
<span class="t" style="left:653.82px;top:409.14px;font-size:14.67px;line-height:17.6px;color:#4f4f4f;transform:scaleX(0.9370);">7,500</span>
<span class="t" style="left:744.82px;top:409.14px;font-size:14.67px;line-height:17.6px;color:#4f4f4f;transform:scaleX(0.9370);">66,70</span>
<span class="t" style="left:817.20px;top:409.14px;font-size:14.67px;line-height:17.6px;color:#4f4f4f;transform:scaleX(0.9370);">13,000</span>
<span class="t" style="left:949.60px;top:409.14px;font-size:14.67px;line-height:17.6px;color:#4f4f4f;transform:scaleX(0.9370);">13,000</span>
<div class="clip" style="left:995.00px;top:407.14px;width:64.00px;height:21.60px"><span class="t" style="left:46.20px;top:2px;font-size:14.67px;line-height:17.6px;color:#4f4f4f;transform:scaleX(0.9370);">188,95</span></div>
<div class="clip" style="left:71.50px;top:433.47px;width:81.50px;height:21.60px"><span class="t" style="left:2.24px;top:2px;font-size:14.67px;line-height:17.6px;color:#4f4f4f;transform:scaleX(0.9150);">000020</span></div>
<span class="t" style="left:157.00px;top:435.47px;font-size:14.67px;line-height:17.6px;color:#4f4f4f;transform:scaleX(0.9639);">ETANOL A VISTA1</span>
<span class="t" style="left:456.12px;top:435.47px;font-size:14.67px;line-height:17.6px;color:#4f4f4f;transform:scaleX(0.9370);">4,399</span>
<span class="t" style="left:536.32px;top:435.47px;font-size:14.67px;line-height:17.6px;color:#4f4f4f;transform:scaleX(0.9370);">7,000</span>
<span class="t" style="left:653.82px;top:435.47px;font-size:14.67px;line-height:17.6px;color:#4f4f4f;transform:scaleX(0.9370);">7,000</span>
<span class="t" style="left:744.82px;top:435.47px;font-size:14.67px;line-height:17.6px;color:#4f4f4f;transform:scaleX(0.9370);">59,13</span>
<span class="t" style="left:817.20px;top:435.47px;font-size:14.67px;line-height:17.6px;color:#4f4f4f;transform:scaleX(0.9370);">14,000</span>
<span class="t" style="left:949.60px;top:435.47px;font-size:14.67px;line-height:17.6px;color:#4f4f4f;transform:scaleX(0.9370);">14,000</span>
<div class="clip" style="left:995.00px;top:433.47px;width:64.00px;height:21.60px"><span class="t" style="left:46.20px;top:2px;font-size:14.67px;line-height:17.6px;color:#4f4f4f;transform:scaleX(0.9370);">218,25</span></div>
<div class="clip" style="left:71.50px;top:459.80px;width:81.50px;height:21.60px"><span class="t" style="left:2.24px;top:2px;font-size:14.67px;line-height:17.6px;color:#4f4f4f;transform:scaleX(0.9150);">000021</span></div>
<span class="t" style="left:157.00px;top:461.80px;font-size:14.67px;line-height:17.6px;color:#4f4f4f;transform:scaleX(0.9877);">BOMBONA</span>
<span class="t" style="left:456.12px;top:461.80px;font-size:14.67px;line-height:17.6px;color:#4f4f4f;transform:scaleX(0.9370);">2,300</span>
<span class="t" style="left:536.32px;top:461.80px;font-size:14.67px;line-height:17.6px;color:#4f4f4f;transform:scaleX(0.9370);">6,900</span>
<span class="t" style="left:653.82px;top:461.80px;font-size:14.67px;line-height:17.6px;color:#4f4f4f;transform:scaleX(0.9370);">6,900</span>
<span class="t" style="left:737.20px;top:461.80px;font-size:14.67px;line-height:17.6px;color:#4f4f4f;transform:scaleX(0.9370);">200,00</span>
<span class="t" style="left:824.82px;top:461.80px;font-size:14.67px;line-height:17.6px;color:#4f4f4f;transform:scaleX(0.9370);">6,900</span>
<span class="t" style="left:957.22px;top:461.80px;font-size:14.67px;line-height:17.6px;color:#4f4f4f;transform:scaleX(0.9370);">6,900</span>
<div class="clip" style="left:995.00px;top:459.80px;width:64.00px;height:21.60px"><span class="t" style="left:46.20px;top:2px;font-size:14.67px;line-height:17.6px;color:#4f4f4f;transform:scaleX(0.9370);">200,00</span></div>
<div class="clip" style="left:71.50px;top:486.13px;width:81.50px;height:21.60px"><span class="t" style="left:2.24px;top:2px;font-size:14.67px;line-height:17.6px;color:#4f4f4f;transform:scaleX(0.9150);">000034</span></div>
<span class="t" style="left:157.00px;top:488.13px;font-size:14.67px;line-height:17.6px;color:#4f4f4f;transform:scaleX(0.9613);">ETANOL BRUNO</span>
<span class="t" style="left:456.12px;top:488.13px;font-size:14.67px;line-height:17.6px;color:#4f4f4f;transform:scaleX(0.9370);">4,399</span>
<span class="t" style="left:536.32px;top:488.13px;font-size:14.67px;line-height:17.6px;color:#4f4f4f;transform:scaleX(0.9370);">8,000</span>
<span class="t" style="left:653.82px;top:488.13px;font-size:14.67px;line-height:17.6px;color:#4f4f4f;transform:scaleX(0.9370);">8,000</span>
<span class="t" style="left:744.82px;top:488.13px;font-size:14.67px;line-height:17.6px;color:#4f4f4f;transform:scaleX(0.9370);">81,86</span>
<span class="t" style="left:817.20px;top:488.13px;font-size:14.67px;line-height:17.6px;color:#4f4f4f;transform:scaleX(0.9370);">15,000</span>
<span class="t" style="left:949.60px;top:488.13px;font-size:14.67px;line-height:17.6px;color:#4f4f4f;transform:scaleX(0.9370);">15,000</span>
<div class="clip" style="left:995.00px;top:486.13px;width:64.00px;height:21.60px"><span class="t" style="left:46.20px;top:2px;font-size:14.67px;line-height:17.6px;color:#4f4f4f;transform:scaleX(0.9370);">240,98</span></div>
<span class="t" style="left:38.20px;top:542.55px;font-size:14.0px;line-height:16.8px;color:#fa1c2c;transform:scaleX(1.0137);-webkit-text-stroke:0.3px #fa1c2c;">Obs: Preço de Custo é baseado na Filial logada.</span>
<span class="t" style="left:79.20px;top:576.92px;font-size:14.67px;line-height:17.6px;color:#1e1e1e;transform:scaleX(1.0084);">Voltar</span>
<div class="ul" style="left:79.20px;top:592px;width:7.30px;background:#1e1e1e"></div>
<span class="t" style="left:927.00px;top:576.72px;font-size:14.67px;line-height:17.6px;color:#1e1e1e;transform:scaleX(0.9098);">Salvar</span>
<span class="t" style="left:1018.40px;top:576.72px;font-size:14.67px;line-height:17.6px;color:#1e1e1e;transform:scaleX(0.9752);">Cancelar</span>
</div>
</body></html>
